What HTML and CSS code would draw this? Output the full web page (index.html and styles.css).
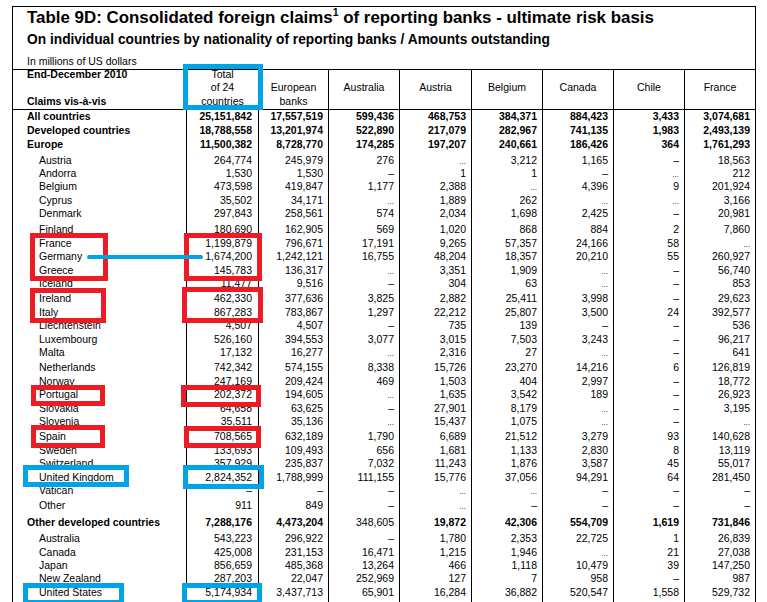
FILE: index.html
```html
<!DOCTYPE html>
<html lang="en">
<head>
<meta charset="utf-8">
<title>Table 9D</title>
<link rel="stylesheet" href="styles.css">
</head>
<body>
<div class="page">
  <div class="sheet">
    <div class="head">
      <div class="title">Table 9D: Consolidated foreign claims<sup>1</sup> of reporting banks - ultimate risk basis</div>
      <div class="subtitle">On individual countries by nationality of reporting banks / Amounts outstanding</div>
      <div class="units">In millions of US dollars</div>
    </div>
    <div class="tbl">
      <div class="r hd">
        <div><div class="hl">End-December 2010</div><div class="hl">&nbsp;</div><div class="hl">Claims vis-à-vis</div></div>
        <div><div class="hl">Total</div><div class="hl">of 24</div><div class="hl">countries</div></div>
        <div><div class="hl">&nbsp;</div><div class="hl">European</div><div class="hl">banks</div></div>
        <div><div class="hl">&nbsp;</div><div class="hl">Australia</div></div>
        <div><div class="hl">&nbsp;</div><div class="hl">Austria</div></div>
        <div><div class="hl">&nbsp;</div><div class="hl">Belgium</div></div>
        <div><div class="hl">&nbsp;</div><div class="hl">Canada</div></div>
        <div><div class="hl">&nbsp;</div><div class="hl">Chile</div></div>
        <div><div class="hl">&nbsp;</div><div class="hl">France</div></div>
      </div>

      <div class="r b first"><div>All countries</div><div>25,151,842</div><div>17,557,519</div><div>599,436</div><div>468,753</div><div>384,371</div><div>884,423</div><div>3,433</div><div>3,074,681</div></div>
      <div class="r b tall"><div>Developed countries</div><div>18,788,558</div><div>13,201,974</div><div>522,890</div><div>217,079</div><div>282,967</div><div>741,135</div><div>1,983</div><div>2,493,139</div></div>
      <div class="r b tall"><div>Europe</div><div>11,500,382</div><div>8,728,770</div><div>174,285</div><div>197,207</div><div>240,661</div><div>186,426</div><div>364</div><div>1,761,293</div></div>

      <div class="r s g25"><div>Austria</div><div>264,774</div><div>245,979</div><div>276</div><div><span class="na">...</span></div><div>3,212</div><div>1,165</div><div>–</div><div>18,563</div></div>
      <div class="r s"><div>Andorra</div><div>1,530</div><div>1,530</div><div>–</div><div>1</div><div>1</div><div>–</div><div><span class="na">...</span></div><div>212</div></div>
      <div class="r s"><div>Belgium</div><div>473,598</div><div>419,847</div><div>1,177</div><div>2,388</div><div><span class="na">...</span></div><div>4,396</div><div>9</div><div>201,924</div></div>
      <div class="r s"><div>Cyprus</div><div>35,502</div><div>34,171</div><div><span class="na">...</span></div><div>1,889</div><div>262</div><div><span class="na">...</span></div><div><span class="na">...</span></div><div>3,166</div></div>
      <div class="r s"><div>Denmark</div><div>297,843</div><div>258,561</div><div>574</div><div>2,034</div><div>1,698</div><div>2,425</div><div>–</div><div>20,981</div></div>

      <div class="r s g28"><div>Finland</div><div>180,690</div><div>162,905</div><div>569</div><div>1,020</div><div>868</div><div>884</div><div>2</div><div>7,860</div></div>
      <div class="r s"><div>France</div><div>1,199,879</div><div>796,671</div><div>17,191</div><div>9,265</div><div>57,357</div><div>24,166</div><div>58</div><div><span class="na">...</span></div></div>
      <div class="r s"><div>Germany</div><div>1,674,200</div><div>1,242,121</div><div>16,755</div><div>48,204</div><div>18,357</div><div>20,210</div><div>55</div><div>260,927</div></div>
      <div class="r s"><div>Greece</div><div>145,783</div><div>136,317</div><div><span class="na">...</span></div><div>3,351</div><div>1,909</div><div><span class="na">...</span></div><div>–</div><div>56,740</div></div>
      <div class="r s"><div>Iceland</div><div>11,477</div><div>9,516</div><div>–</div><div>304</div><div>63</div><div><span class="na">...</span></div><div>–</div><div>853</div></div>

      <div class="r s g2"><div>Ireland</div><div>462,330</div><div>377,636</div><div>3,825</div><div>2,882</div><div>25,411</div><div>3,998</div><div>–</div><div>29,623</div></div>
      <div class="r s"><div>Italy</div><div>867,283</div><div>783,867</div><div>1,297</div><div>22,212</div><div>25,807</div><div>3,500</div><div>24</div><div>392,577</div></div>
      <div class="r s"><div>Liechtenstein</div><div>4,507</div><div>4,507</div><div>–</div><div>735</div><div>139</div><div>–</div><div>–</div><div>536</div></div>
      <div class="r s"><div>Luxembourg</div><div>526,160</div><div>394,553</div><div>3,077</div><div>3,015</div><div>7,503</div><div>3,243</div><div>–</div><div>96,217</div></div>
      <div class="r s"><div>Malta</div><div>17,132</div><div>16,277</div><div><span class="na">...</span></div><div>2,316</div><div>27</div><div><span class="na">...</span></div><div>–</div><div>641</div></div>

      <div class="r s g2"><div>Netherlands</div><div>742,342</div><div>574,155</div><div>8,338</div><div>15,726</div><div>23,270</div><div>14,216</div><div>6</div><div>126,819</div></div>
      <div class="r s"><div>Norway</div><div>247,169</div><div>209,424</div><div>469</div><div>1,503</div><div>404</div><div>2,997</div><div>–</div><div>18,772</div></div>
      <div class="r s"><div>Portugal</div><div>202,372</div><div>194,605</div><div><span class="na">...</span></div><div>1,635</div><div>3,542</div><div>189</div><div>–</div><div>26,923</div></div>
      <div class="r s"><div>Slovakia</div><div>64,658</div><div>63,625</div><div>–</div><div>27,901</div><div>8,179</div><div><span class="na">...</span></div><div>–</div><div>3,195</div></div>
      <div class="r s"><div>Slovenia</div><div>35,511</div><div>35,136</div><div><span class="na">...</span></div><div>15,437</div><div>1,075</div><div><span class="na">...</span></div><div>–</div><div><span class="na">...</span></div></div>

      <div class="r s g2"><div>Spain</div><div>708,565</div><div>632,189</div><div>1,790</div><div>6,689</div><div>21,512</div><div>3,279</div><div>93</div><div>140,628</div></div>
      <div class="r s"><div>Sweden</div><div>133,693</div><div>109,493</div><div>656</div><div>1,681</div><div>1,133</div><div>2,830</div><div>8</div><div>13,119</div></div>
      <div class="r s"><div>Switzerland</div><div>357,929</div><div>235,837</div><div>7,032</div><div>11,243</div><div>1,876</div><div>3,587</div><div>45</div><div>55,017</div></div>
      <div class="r s"><div>United Kingdom</div><div>2,824,352</div><div>1,788,999</div><div>111,155</div><div>15,776</div><div>37,056</div><div>94,291</div><div>64</div><div>281,450</div></div>
      <div class="r s"><div>Vatican</div><div>–</div><div>–</div><div>–</div><div><span class="na">...</span></div><div><span class="na">...</span></div><div>–</div><div>–</div><div>–</div></div>

      <div class="r s g2"><div>Other</div><div>911</div><div>849</div><div>–</div><div><span class="na">...</span></div><div>–</div><div>–</div><div>–</div><div>–</div></div>

      <div class="r b g3"><div>Other developed countries</div><div>7,288,176</div><div>4,473,204</div><div class="reg">348,605</div><div>19,872</div><div>42,306</div><div>554,709</div><div>1,619</div><div>731,846</div></div>

      <div class="r s g3"><div>Australia</div><div>543,223</div><div>296,922</div><div>–</div><div>1,780</div><div>2,353</div><div>22,725</div><div>1</div><div>26,839</div></div>
      <div class="r s"><div>Canada</div><div>425,008</div><div>231,153</div><div>16,471</div><div>1,215</div><div>1,946</div><div><span class="na">...</span></div><div>21</div><div>27,038</div></div>
      <div class="r s"><div>Japan</div><div>856,659</div><div>485,368</div><div>13,264</div><div>466</div><div>1,118</div><div>10,479</div><div>39</div><div>147,250</div></div>
      <div class="r s"><div>New Zealand</div><div>287,203</div><div>22,047</div><div>252,969</div><div>127</div><div>7</div><div>958</div><div>–</div><div>987</div></div>
      <div class="r s"><div>United States</div><div>5,174,934</div><div>3,437,713</div><div>65,901</div><div>16,284</div><div>36,882</div><div>520,547</div><div>1,558</div><div>529,732</div></div>
      <div class="r s"><div>&nbsp;</div><div></div><div></div><div></div><div></div><div></div><div></div><div></div><div></div></div>
    </div>
  </div>

  <div class="mark blue m-head"></div>
  <div class="mark red m-fr-l"></div>
  <div class="mark red m-fr-t"></div>
  <div class="link"></div>
  <div class="mark red m-ie-l"></div>
  <div class="mark red m-ie-t"></div>
  <div class="mark red m-pt-l"></div>
  <div class="mark red m-pt-t"></div>
  <div class="mark red m-es-l"></div>
  <div class="mark red m-es-t"></div>
  <div class="mark blue m-uk-l"></div>
  <div class="mark blue m-uk-t"></div>
  <div class="mark blue m-us-l"></div>
  <div class="mark blue m-us-t"></div>
</div>
</body>
</html>
```

FILE: styles.css
```css
html, body {
  margin: 0;
  padding: 0;
  background: #fff;
}
body {
  font-family: "Liberation Sans", Arial, sans-serif;
  color: #000;
  overflow: hidden;
}
.page {
  position: relative;
  width: 767px;
  height: 602px;
  overflow: hidden;
}
.sheet {
  margin: 6px 0 0 12px;
  width: 742px;
  border: 1px solid #000;
  border-bottom: none;
}
.head {
  padding-left: 14px;
}
.title {
  font-weight: bold;
  font-size: 16.9px;
  line-height: 22px;
  height: 22px;
  white-space: nowrap;
}
.title sup {
  font-size: 10.5px;
  line-height: 0;
  vertical-align: 7px;
}
.subtitle {
  font-weight: bold;
  font-size: 13.75px;
  line-height: 18px;
  margin-top: 2px;
  white-space: nowrap;
}
.units {
  font-size: 10.5px;
  line-height: 12px;
  margin-top: 6px;
  margin-bottom: 2px;
}
.tbl {
  border-top: 1px solid #000;
  font-size: 10.5px;
}
.r {
  display: grid;
  grid-template-columns: 173px 72px 70px 71px 72px 71px 71px 71px 71px;
  line-height: 13.4px;
}
.r > div {
  border-left: 1px solid #000;
  text-align: right;
  padding-right: 5px;
  white-space: nowrap;
}
.r > div:first-child {
  border-left: none;
  text-align: left;
  padding-left: 14px;
  padding-right: 0;
}
.r > div:nth-child(2) {
  padding-right: 6px;
}
.hd {
  height: 39px;
  border-bottom: 1px solid #000;
}
.hd > div {
  text-align: center;
  padding-right: 0;
  overflow: visible;
}
.hd > div:nth-child(2) {
  padding-right: 0;
}
.hd > div:first-child {
  font-weight: bold;
  text-align: left;
}
.hl {
  line-height: 13.5px;
}
.hd > div > .hl:first-child {
  margin-top: -2.2px;
}
.b {
  font-weight: bold;
}
.b .reg {
  font-weight: normal;
}
.first {
  line-height: 13px;
}
.tall {
  line-height: 14px;
}
.s > div:first-child {
  padding-left: 26px;
}
.g25 > div { padding-top: 2.5px; }
.g28 > div { padding-top: 2.8px; }
.g2 > div { padding-top: 2px; }
.g3 > div { padding-top: 3px; }
.na {
  font-size: 8px;
  line-height: 0;
}

.mark {
  position: absolute;
  box-sizing: border-box;
  border: 5px solid;
}
.blue { border-color: #00a2e8; }
.red { border-color: #ed1c24; }
.m-head { left: 183px; top: 64px; width: 80px; height: 46px; }
.m-fr-l { left: 30px; top: 233px; width: 78px; height: 48px; }
.m-fr-t { left: 184px; top: 233px; width: 78px; height: 48px; }
.m-ie-l { left: 30px; top: 288px; width: 76px; height: 35px; }
.m-ie-t { left: 182px; top: 287px; width: 81px; height: 36px; }
.m-pt-l { left: 31px; top: 385px; width: 74px; height: 21px; }
.m-pt-t { left: 181px; top: 385px; width: 80px; height: 22px; }
.m-es-l { left: 31px; top: 425px; width: 74px; height: 23px; }
.m-es-t { left: 184px; top: 426px; width: 77px; height: 22px; }
.m-uk-l { left: 23px; top: 465px; width: 106px; height: 22px; }
.m-uk-t { left: 183px; top: 465px; width: 81px; height: 24px; }
.m-us-l { left: 23px; top: 583px; width: 101px; height: 22px; }
.m-us-t { left: 182px; top: 583px; width: 80px; height: 22px; }
.link {
  position: absolute;
  left: 87px;
  top: 255px;
  width: 116px;
  height: 4px;
  border-radius: 2px;
  background: #00a2e8;
}
```
